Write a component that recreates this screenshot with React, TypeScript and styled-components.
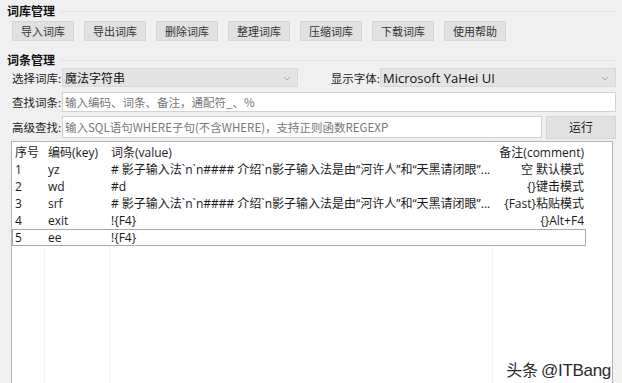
import React from 'react'
import styled, { createGlobalStyle } from 'styled-components'

const GlobalStyle = createGlobalStyle`
  html, body {
    margin: 0;
    padding: 0;
    background: #f0f0f0;
  }
  body {
    font-family: "Noto Sans CJK SC", "Noto Sans", sans-serif;
    color: #1c1c1c;
  }
`

const Window = styled.div`
  position: relative;
  width: 622px;
  height: 383px;
  overflow: hidden;
  box-sizing: border-box;
  padding: 3px 6px 0 7px;
  display: flex;
  flex-direction: column;
  background: #f0f0f0;
`

const GroupTitle = styled.div<{ $top?: number }>`
  display: flex;
  align-items: center;
  gap: 4px;
  margin-top: ${(p) => p.$top || 0}px;
  height: 16px;
  font-size: 12px;
  font-weight: 700;
  line-height: 16px;
  color: #111;

  &::after {
    content: '';
    flex: 1;
    height: 1px;
    background: #e4e4e4;
  }
`

const ButtonRow = styled.div`
  display: flex;
  gap: 10px;
  margin-top: 2px;
  padding: 0 0 0 5px;
`

const ToolButton = styled.button<{ $w?: number }>`
  width: ${(p) => p.$w || 62}px;
  height: ${(p) => (p.$w ? 23 : 20)}px;
  padding: 0;
  border: 1px solid #d6d6d6;
  background: #e1e1e1;
  font-family: inherit;
  font-size: 11px;
  color: #333;
  line-height: 18px;
  flex-shrink: 0;
`

const Form = styled.div`
  display: flex;
  flex-direction: column;
  padding-left: 5px;
`

const FormRow = styled.div<{ $h: number; $top: number }>`
  display: flex;
  align-items: center;
  height: ${(p) => p.$h}px;
  margin-top: ${(p) => p.$top}px;
`

const Label = styled.span<{ $w?: number }>`
  width: ${(p) => p.$w || 50}px;
  flex-shrink: 0;
  font-size: 11.5px;
  color: #222;
  white-space: nowrap;
  text-align: ${(p) => (p.$w ? 'right' : 'left')};
`

const SelectBox = styled.div<{ $w: number; $latin?: boolean }>`
  position: relative;
  width: ${(p) => p.$w}px;
  height: 100%;
  box-sizing: border-box;
  display: flex;
  align-items: center;
  padding-left: 2px;
  background: #e4e4e4;
  border: 1px solid #d8d8d8;
  font-size: ${(p) => (p.$latin ? 13 : 12)}px;
  font-family: ${(p) =>
    p.$latin ? '"Open Sans", "Noto Sans", sans-serif' : 'inherit'};
  color: #111;

  svg {
    position: absolute;
    right: 6px;
    top: 7px;
  }
`

const TextInput = styled.input<{ $w?: number }>`
  width: ${(p) => (p.$w ? `${p.$w}px` : '100%')};
  height: 100%;
  box-sizing: border-box;
  margin: 0;
  padding: 0 0 0 2px;
  border: 1px solid #d2d2d2;
  background: #fff;
  font-family: inherit;
  font-size: 11.5px;
  outline: none;

  &::placeholder {
    color: #777;
  }
`

const RunButton = styled(ToolButton)`
  margin-left: 4px;
  font-size: 12px;
  color: #222;
`

const ListBox = styled.div`
  margin: 3px 0 0 4px;
  width: 602px;
  height: 260px;
  flex-shrink: 0;
  box-sizing: border-box;
  border: 1px solid #b4b4b4;
  background: #fff;
  padding-top: 2px;
  background-image: linear-gradient(#f4f4f4, #f4f4f4),
    linear-gradient(#f4f4f4, #f4f4f4), linear-gradient(#f4f4f4, #f4f4f4);
  background-size: 1px 100%;
  background-position: 32px 0, 97px 0, 480px 0;
  background-repeat: no-repeat;
`

const ListRow = styled.div<{ $selected?: boolean }>`
  display: grid;
  grid-template-columns: 33px 63px 380px minmax(0, 1fr);
  align-items: center;
  width: 574px;
  height: 17px;
  box-sizing: border-box;
  padding: 0 1px 0 2px;
  background: #fff;
  border: 1px solid ${(p) => (p.$selected ? '#a9a9a9' : 'transparent')};
  font-family: "Open Sans", "Noto Sans CJK SC", sans-serif;
  font-size: 12px;
  line-height: 15px;
  color: #1a1a1a;
  white-space: nowrap;
`

const Cell = styled.span<{ $right?: boolean }>`
  overflow: hidden;
  text-align: ${(p) => (p.$right ? 'right' : 'left')};
`

const Watermark = styled.div`
  position: absolute;
  right: 11px;
  bottom: 2px;
  font-size: 16px;
  color: #2a2a2a;
  text-shadow: 0 0 2px #fff, 0 0 2px #fff;
  letter-spacing: -0.3px;

  span {
    font-family: "Liberation Sans", Arial, sans-serif;
    font-size: 17px;
  }
`

function Chevron() {
  return (
    <svg width="8" height="5" viewBox="0 0 8 5">
      <path d="M1 1 L4 4 L7 1" fill="none" stroke="#a6a6a6" strokeWidth="1" />
    </svg>
  )
}

const tools = ['导入词库', '导出词库', '删除词库', '整理词库', '压缩词库', '下载词库', '使用帮助']

const rows = [
  ['1', 'yz', '# 影子输入法`n`n#### 介绍`n影子输入法是由“河许人”和“天黑请闭眼”...', '空 默认模式'],
  ['2', 'wd', '#d', '{}键击模式'],
  ['3', 'srf', '# 影子输入法`n`n#### 介绍`n影子输入法是由“河许人”和“天黑请闭眼”...', '{Fast}粘贴模式'],
  ['4', 'exit', '!{F4}', '{}Alt+F4'],
  ['5', 'ee', '!{F4}', '']
]

export default function App() {
  return (
    <>
      <GlobalStyle />
      <Window>
        <GroupTitle>词库管理</GroupTitle>
        <ButtonRow>
          {tools.map((t) => (
            <ToolButton key={t}>{t}</ToolButton>
          ))}
        </ButtonRow>

        <GroupTitle $top={11}>词条管理</GroupTitle>
        <Form>
          <FormRow $h={19} $top={0}>
            <Label>选择词库:</Label>
            <SelectBox $w={236}>
              魔法字符串
              <Chevron />
            </SelectBox>
            <Label $w={82}>显示字体:</Label>
            <SelectBox $w={236} $latin>
              Microsoft YaHei UI
              <Chevron />
            </SelectBox>
          </FormRow>
          <FormRow $h={20} $top={5}>
            <Label>查找词条:</Label>
            <TextInput placeholder="输入编码、词条、备注，通配符_、%" />
          </FormRow>
          <FormRow $h={22} $top={4}>
            <Label>高级查找:</Label>
            <TextInput
              $w={480}
              placeholder="输入SQL语句WHERE子句(不含WHERE)，支持正则函数REGEXP"
            />
            <RunButton $w={70}>运行</RunButton>
          </FormRow>
        </Form>

        <ListBox>
          <ListRow>
            <Cell>序号</Cell>
            <Cell>编码(key)</Cell>
            <Cell>词条(value)</Cell>
            <Cell $right>备注(comment)</Cell>
          </ListRow>
          {rows.map((r) => (
            <ListRow key={r[0]} $selected={r[0] === '5'}>
              <Cell>{r[0]}</Cell>
              <Cell>{r[1]}</Cell>
              <Cell>{r[2]}</Cell>
              <Cell $right>{r[3]}</Cell>
            </ListRow>
          ))}
        </ListBox>

        <Watermark>
          头条 <span>@ITBang</span>
        </Watermark>
      </Window>
    </>
  )
}
